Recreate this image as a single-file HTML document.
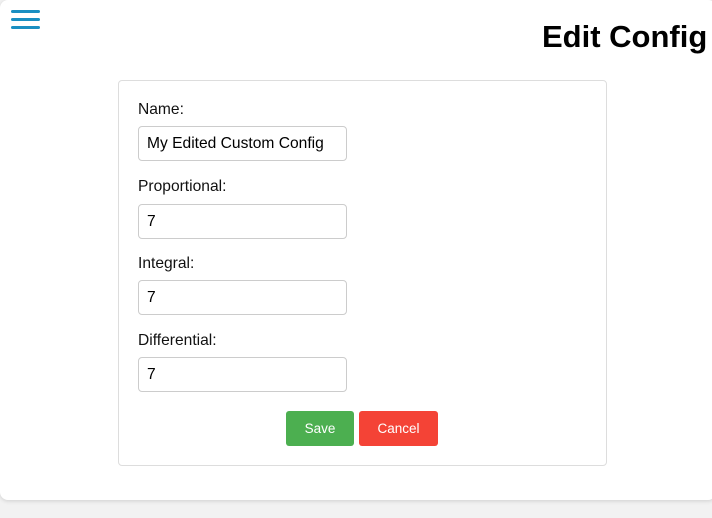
<!DOCTYPE html>
<html><head><style>
body{margin:0;width:712px;height:518px;background:#f2f2f2;font-family:"Liberation Sans",Arial,sans-serif;position:relative;overflow:hidden}
.card{position:absolute;left:0;top:0;width:716px;height:500px;background:#fff;border-radius:8px;box-shadow:0 1px 4px rgba(0,0,0,.15)}
.bar{position:absolute;left:11px;width:29px;height:3px;background:#1a8fc2;border-radius:2px}
h1{position:absolute;left:542px;top:19px;margin:0;font-size:31px;font-weight:bold;color:#000;white-space:nowrap}
.box{position:absolute;left:118px;top:80px;width:487px;height:384px;border:1px solid #ddd;border-radius:4px}
.lbl{position:absolute;left:138px;font-size:15.6px;color:#111}
.in{position:absolute;left:138px;border:1px solid #ccc;border-radius:4px;font-size:15.6px;line-height:33px;padding-left:8px;box-sizing:border-box;width:209px;height:35px}
.btn{position:absolute;top:411px;height:35px;color:#fff;font-size:13.5px;line-height:35px;text-align:center;border-radius:3px}
</style></head><body>
<div class="card">
<div class="bar" style="top:10px"></div><div class="bar" style="top:18px"></div><div class="bar" style="top:26px"></div>
<h1>Edit Config</h1>
</div>
<div class="box"></div>
<div class="lbl" style="top:101px">Name:</div>
<div class="in" style="top:126px">My Edited Custom Config</div>
<div class="lbl" style="top:178px">Proportional:</div>
<div class="in" style="top:204px">7</div>
<div class="lbl" style="top:255px">Integral:</div>
<div class="in" style="top:280px">7</div>
<div class="lbl" style="top:332px">Differential:</div>
<div class="in" style="top:357px">7</div>
<div class="btn" style="left:286px;width:68px;background:#4caf50">Save</div>
<div class="btn" style="left:359px;width:79px;background:#f44336">Cancel</div>
</body></html>
